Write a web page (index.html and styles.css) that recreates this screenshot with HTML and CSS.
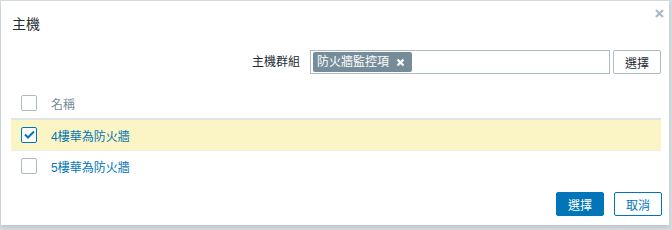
FILE: index.html
```html
<!DOCTYPE html>
<html lang="zh-TW">
<head>
<meta charset="utf-8">
<link rel="stylesheet" href="styles.css">
</head>
<body>
<div class="dialog">
  <div class="head">
    <h4 class="title">主機</h4>
    <button class="close" aria-label="close">
      <svg width="9" height="9" viewBox="0 0 9 9"><path d="M1 1 L8 8 M8 1 L1 8" stroke="#acbbc2" stroke-width="2.2" stroke-linecap="butt"/></svg>
    </button>
  </div>
  <div class="body">
    <div class="form-row">
      <label class="label">主機群組</label>
      <div class="multiselect">
        <span class="tag">防火牆監控項<svg class="tag-x" width="9" height="9" viewBox="0 0 9 9"><path d="M1.5 1.5 L7.5 7.5 M7.5 1.5 L1.5 7.5" stroke="#fff" stroke-width="2.2"/></svg></span>
      </div>
      <button class="btn-grey">選擇</button>
    </div>
    <table class="list">
      <thead>
        <tr><th class="cb-cell"><span class="cb"></span></th><th>名稱</th></tr>
      </thead>
      <tbody>
        <tr class="selected"><td class="cb-cell"><span class="cb checked"><svg width="11" height="9" viewBox="0 0 11 9"><path d="M1 4.5 L4 7.5 L10 1.5" fill="none" stroke="#0275b8" stroke-width="2"/></svg></span></td><td><a class="link">4樓華為防火牆</a></td></tr>
        <tr><td class="cb-cell"><span class="cb"></span></td><td><a class="link">5樓華為防火牆</a></td></tr>
      </tbody>
    </table>
  </div>
  <div class="foot">
    <button class="btn-primary">選擇</button>
    <button class="btn-alt">取消</button>
  </div>
</div>
</body>
</html>
```
FILE: styles.css
```css
html, body {
  margin: 0;
  padding: 0;
}
body {
  background: #d6dde0;
  font-family: "Liberation Sans", Arial, "Noto Sans CJK TC", sans-serif;
  font-size: 12px;
  color: #1f2c33;
  width: 672px;
  height: 230px;
  overflow: hidden;
}
.dialog {
  position: relative;
  box-sizing: border-box;
  margin: 1px 0 0 1px;
  width: 668px;
  height: 224px;
  background: #ffffff;
  box-shadow: 0 2px 4px rgba(0,0,0,0.12);
  display: flex;
  flex-direction: column;
}
.head {
  padding: 15px 11px 0 11px;
  height: 34px;
}
.title {
  margin: 0;
  font-size: 14px;
  line-height: 16px;
  font-weight: normal;
  color: #1f2c33;
}
.close {
  position: absolute;
  top: 7px;
  right: 4px;
  width: 11px;
  height: 11px;
  padding: 1px;
  border: 0;
  background: none;
  display: flex;
  align-items: center;
  justify-content: center;
}
.body {
  padding: 0 7px 0 10px;
  flex: 1;
}
.form-row {
  display: flex;
  align-items: center;
  height: 24px;
}
.label {
  width: 299px;
  text-align: right;
  padding-right: 10px;
  box-sizing: border-box;
  line-height: 14px;
}
.multiselect {
  box-sizing: border-box;
  width: 300px;
  height: 24px;
  border: 1px solid #acbbc2;
  background: #fff;
  padding: 1px 2px;
  display: flex;
  align-items: center;
  margin-right: 3px;
}
.tag {
  display: inline-flex;
  align-items: center;
  height: 20px;
  box-sizing: border-box;
  padding: 0 7px 0 4px;
  background: #768d99;
  color: #fff;
  font-size: 12px;
  line-height: 14px;
  border-radius: 2px;
}
.tag-x {
  margin-left: 7px;
}
.btn-grey {
  box-sizing: border-box;
  width: 48px;
  height: 24px;
  border: 1px solid #acbbc2;
  background: #fff;
  color: #1f2c33;
  font: inherit;
  padding: 0;
  border-radius: 2px;
}
.list {
  margin-top: 14px;
  width: 650px;
  border-collapse: collapse;
}
.list th {
  text-align: left;
  font-weight: normal;
  color: #768d99;
  height: 30px;
  padding: 0;
  border-bottom: 2px solid #dfe4e7;
  vertical-align: middle;
}
.list td {
  height: 30px;
  padding: 0;
  border-bottom: 1px solid #ebeef0;
  vertical-align: middle;
}
.list tbody tr:last-child td {
  border-bottom: 0;
}
.list tr.selected td {
  background: #fbf5c5;
}
.cb-cell {
  width: 40px;
  padding-left: 10px !important;
  box-sizing: border-box;
}
.cb {
  display: flex;
  align-items: center;
  justify-content: center;
  box-sizing: border-box;
  width: 16px;
  height: 16px;
  margin-top: -1px;
  border: 1px solid #acbbc2;
  background: #fff;
  border-radius: 2px;
}
.cb.checked {
  border-color: #0275b8;
}
.link {
  color: #0275b8;
  text-decoration: none;
}
.foot {
  display: flex;
  justify-content: flex-end;
  gap: 10px;
  padding: 0 7px 9px 0;
}
.btn-primary, .btn-alt {
  box-sizing: border-box;
  width: 48px;
  height: 24px;
  font: inherit;
  padding: 0;
  border-radius: 2px;
}
.btn-primary {
  background: #0275b8;
  border: 1px solid #0275b8;
  color: #fff;
}
.btn-alt {
  background: #fff;
  border: 1px solid #0275b8;
  color: #0275b8;
}
```
